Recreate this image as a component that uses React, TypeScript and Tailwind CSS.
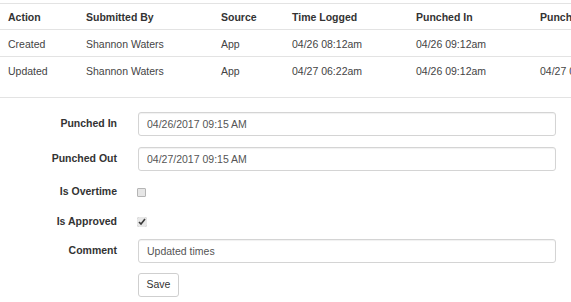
import React from 'react';

const rows = [
  { action: 'Created', by: 'Shannon Waters', source: 'App', logged: '04/26 08:12am', punchedIn: '04/26 09:12am', punchedOut: '', tall: false },
  { action: 'Updated', by: 'Shannon Waters', source: 'App', logged: '04/27 06:22am', punchedIn: '04/26 09:12am', punchedOut: '04/27 09:15am', tall: true },
];

const heads = ['Action', 'Submitted By', 'Source', 'Time Logged', 'Punched In', 'Punched Out'];
const widths = ['w-[78px]', 'w-[135px]', 'w-[71px]', 'w-[124px]', 'w-[124px]', 'w-[168px]'];

function Field({ label, children, className }: { label: string; children: React.ReactNode; className: string }) {
  return (
    <div className={`flex items-center ${className}`}>
      <label className="w-[117px] shrink-0 text-right font-bold text-[#333]">{label}</label>
      <div className="ml-[21px] flex h-full w-[418px] items-center">{children}</div>
    </div>
  );
}

function TextInput({ value }: { value: string }) {
  return (
    <input
      readOnly
      value={value}
      className="h-[24px] w-full rounded-[3px] border border-[#d4d4d4] bg-white px-[8px] text-[10.5px] text-[#555] shadow-[inset_0_1px_1px_rgba(0,0,0,0.06)] outline-none"
    />
  );
}

export default function App() {
  return (
    <div className="h-[302px] w-[571px] overflow-hidden bg-white text-[10.5px] text-[#444]" style={{ fontFamily: '"Liberation Sans", Arial, sans-serif' }}>
      <div className="pt-[3px]">
        <table className="w-[700px] table-fixed border-collapse">
          <colgroup>
            {widths.map((w) => <col key={w + heads[widths.indexOf(w)]} className={w} />)}
          </colgroup>
          <thead>
            <tr className="h-[26px] border-t border-b border-[#e3e3e3]">
              {heads.map((h) => (
                <th key={h} className="whitespace-nowrap pl-[8px] pt-[2px] text-left align-middle font-bold text-[#333]">{h}</th>
              ))}
            </tr>
          </thead>
          <tbody>
            {rows.map((r) => (
              <tr key={r.action} className={`border-b border-[#e3e3e3] ${r.tall ? 'h-[41px]' : 'h-[27px]'}`}>
                {[r.action, r.by, r.source, r.logged, r.punchedIn, r.punchedOut].map((c, i) => (
                  <td key={i} className="whitespace-nowrap pl-[8px] pt-[7px] align-top">{c}</td>
                ))}
              </tr>
            ))}
          </tbody>
        </table>
      </div>

      <form className="pt-[14px]">
        <Field label="Punched In" className="h-[24px]">
          <TextInput value="04/26/2017 09:15 AM" />
        </Field>
        <Field label="Punched Out" className="mt-[11px] h-[24px]">
          <TextInput value="04/27/2017 09:15 AM" />
        </Field>
        <Field label="Is Overtime" className="mt-[9px] h-[24px]">
          <span className="ml-[-1px] h-[9px] w-[9px] rounded-[1px] border border-[#b5b5b5] bg-[#e6e6e6]" />
        </Field>
        <Field label="Is Approved" className="mt-[6px] h-[24px]">
          <input type="checkbox" readOnly checked className="ml-[-1px] h-[10px] w-[10px] accent-[#e8e8e8]" />
        </Field>
        <Field label="Comment" className="mt-[5px] h-[24px]">
          <TextInput value="Updated times" />
        </Field>
        <div className="mt-[10px] pl-[138px]">
          <button type="button" className="h-[24px] w-[41px] rounded-[3px] border border-[#cfcfcf] bg-white text-[10.5px] text-[#333]">Save</button>
        </div>
      </form>
    </div>
  );
}
